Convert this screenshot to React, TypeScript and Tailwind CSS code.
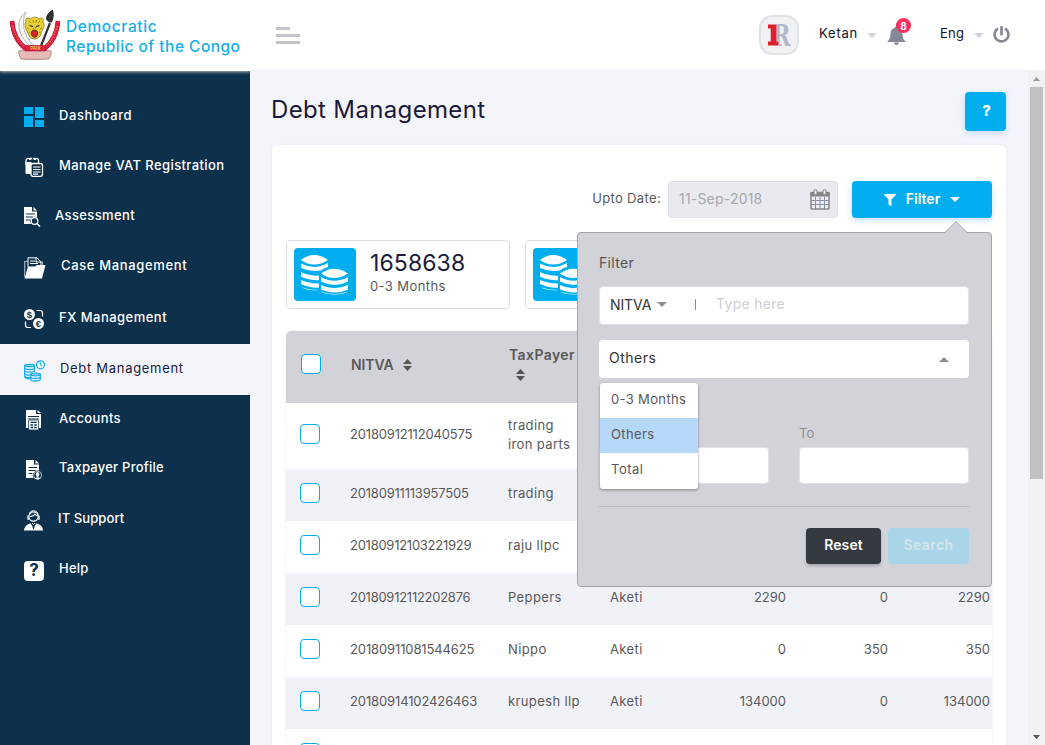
import React from "react";
import { FaPowerOff, FaFilter } from "react-icons/fa";

const Svg = ({ w, h, className = "", children }: { w: number; h: number; className?: string; children: React.ReactNode }) => (
  <svg width={w} height={h} viewBox={`0 0 ${w} ${h}`} className={"shrink-0 " + className} fill="none">{children}</svg>
);

const Triangle = ({ up = false, className = "" }: { up?: boolean; className?: string }) => (
  <svg width="10" height="5" viewBox="0 0 10 5" className={"shrink-0 " + className} fill="currentColor">
    <path d={up ? "M0 5 5 0l5 5z" : "M0 0h10L5 5z"} />
  </svg>
);

const Emblem = () => (
  <Svg w={52} h={52}>
    <path d="M17 3C6 10 8 26 21 37L25 37C14 25 12 14 17 3z" fill="#f4f4f4" stroke="#a3a3a3" strokeWidth=".8" />
    <path d="M32 37 41 14" stroke="#333" strokeWidth="2.2" />
    <path d="M43.500 1c1 4 1 8-1 12-2.500 0-4-1-5-3 0-4 3-7 6-9z" fill="#333" stroke="#222" />
    <path d="M17 13c-1-4 1-5 4-3 3-2.500 6-2.500 9 0 3-2 5-1 4 3 2 3 1 6-1 9l-2 5c-3 4-8 4-11 0l-2-5c-2-3-3-6-1-9z" fill="#e6cf35" stroke="#8b7b28" strokeWidth=".8" />
    <path d="M20 12l2 2m7 0 2-2M24 11l.5 2.500m3-2.500-.5 2.500M18 19l2 1m13-1-2 1M19.500 24l1.500-1m9 0 1.500 1" stroke="#8a7926" strokeWidth=".8" />
    <path d="M20.500 16.500l3.500 1.200m6.500-1.200-3.500 1.200" stroke="#333" strokeWidth="1.300" />
    <path d="M24.500 18v2.500h2V18" stroke="#9b872b" strokeWidth=".6" />
    <path d="M23 22q2.500-1.500 5 0l.8 3q-.8 3-3.300 3.500-2.500-.5-3.300-3.500z" fill="#df1f2d" stroke="#4b3b12" strokeWidth="1" />
    <path d="M3 12c1 13 6 22 14 28M49 12c-1 13-6 22-14 28" stroke="#9e1830" strokeWidth="4.600" />
    <path d="M3 12c1 13 6 22 14 28M49 12c-1 13-6 22-14 28" stroke="#e01f40" strokeWidth="3.800" />
    <path d="M4 17c2 9 6 16 12 21M48 17c-2 9-6 16-12 21" stroke="#ef9a3a" strokeWidth="1" strokeDasharray="1.200 1.500" />
    <path d="M10 42q16-3 32 0c1 3-1 5-2 8q-14 1-28 0c-1-3-3-5-2-8z" fill="#e5bbb5" stroke="#aa817c" strokeWidth=".9" />
    <path d="M16 36.500h21V42H16z" fill="#e01f40" stroke="#a31631" strokeWidth=".6" />
    <text x="26.500" y="41" textAnchor="middle" fontSize="4.600" fontWeight="bold" fill="#f5d24b" className="font-['Liberation_Sans',sans-serif]">PAIX</text>
  </Svg>
);

const navy = "#0d314d";
const DashboardIcon = () => <Svg w={20} h={20}><path d="M0 0h9v7H0zM11 0h9v11h-9zM0 9h9v11H0zM11 13h9v7h-9z" fill="#00aeef" /></Svg>;
const VatIcon = () => (
  <Svg w={19} h={20} className="ml-px">
    <path d="M1 8V3.500C1 2 2 1.500 3 1.500h9q1.500 0 1.500 2V6" stroke="#fff" strokeWidth="1.300" />
    <path d="M4.500 0v3M7.500 0v2M10.500 0v3" stroke={navy} strokeWidth="1" />
    <path d="M4 2h2M9 2h2" stroke="#fff" strokeWidth="2" />
    <path d="M.5 5h6v12H2Q.5 17 .5 15.500z" fill="#fff" />
    <rect x="6" y="6.500" width="11.500" height="12.800" rx="2" fill={navy} stroke="#fff" strokeWidth="1.300" />
    <path d="M8 10h7.500M8 12.500h7.500M8 15h7.500M8 17.200h5" stroke="#fff" strokeWidth="1.200" />
  </Svg>
);
const AssessmentIcon = () => (
  <Svg w={17} h={20}>
    <path d="M0 0h8v4.500h5V10l-3 2-3 2v3H0z" fill="#fff" /><path d="M9.500 0 13 3.500H9.500z" fill="#fff" />
    <path d="M2 7h9M2 10h7M2 13h4" stroke={navy} strokeWidth="1" />
    <circle cx="10.500" cy="14" r="4.300" fill={navy} /><circle cx="10.500" cy="14" r="3.300" stroke="#fff" strokeWidth="1.200" /><path d="m13 16.500 3 3" stroke="#fff" strokeWidth="1.600" />
  </Svg>
);
const CaseIcon = () => (
  <Svg w={22} h={22}>
    <path d="M.7 20V4.500h3M15 5h3.500v5" stroke="#9fb0bc" strokeWidth="1.200" />
    <path d="M4 10V.8h9L17 5v6" fill={navy} stroke="#fff" /><path d="M12 1v4h5M6 4h5M6 6.500h8" stroke="#fff" />
    <path d="M4 9.500h7l2-1.500h8.500L18 21.500H.5z" fill="#fff" />
  </Svg>
);
const FxIcon = () => (
  <Svg w={21} h={21}>
    <circle cx="5.500" cy="5.500" r="5.500" fill="#fff" /><circle cx="14.500" cy="14.500" r="5.500" fill="#fff" />
    <path d="M12.500 1.500H16q2.500 0 2.500 2.500v3.500M1.500 12.500V16q0 2.500 2.500 2.500h3" stroke="#fff" strokeWidth="1.200" />
    <text x="5.500" y="9" textAnchor="middle" fontSize="9.500" fontWeight="bold" fill={navy} className="font-['Liberation_Sans',sans-serif]">$</text>
    <text x="14.300" y="18" textAnchor="middle" fontSize="9.500" fontWeight="bold" fill={navy} className="font-['Liberation_Sans',sans-serif]">€</text>
  </Svg>
);
const DebtIcon = () => (
  <Svg w={22} h={22}>
    <g stroke="#16aeec" strokeWidth="1.300">
      <path d="M.7 5.500v11c0 2 3 2.200 5.300 2M10.300 5.500v6" />
      <ellipse cx="5.500" cy="5.500" rx="4.800" ry="1.200" fill="#8ed8f6" />
      <path d="M.7 8c0 2 9.600 2 9.600 0M.7 10.700c0 2 9.600 2 9.600 0M.7 13.400c0 1.700 4 2 5.500 1.500M.7 16c0 1.500 3 2 5.500 1.500" />
      <ellipse cx="11.500" cy="14.500" rx="4.800" ry="1.300" fill="#8ed8f6" />
      <path d="M6.700 14.500v5c0 2 9.600 2 9.600 0v-5M6.700 17c0 2 9.600 2 9.600 0" />
      <circle cx="16.500" cy="4.800" r="4" /><path d="M16.500 2.500v2.600l1.500 1" strokeWidth="1" />
    </g>
  </Svg>
);
const AccountsIcon = () => (
  <Svg w={16} h={20} className="ml-[2px]">
    <path d="M0 0h10v4h5v14H0z" fill="#fff" /><path d="m11.500 0 3.500 3h-3.500z" fill="#fff" />
    <path d="M2 6.500h11M2 9h11" stroke={navy} strokeWidth="1" />
    <rect x="2.600" y="10" width="10" height="10" rx="1" fill="#fff" stroke={navy} strokeWidth=".8" />
    <path d="M4.500 12.300h6.200M4.500 15H7M8.200 15h2.500M4.500 17.500H7M8.200 17.500h2.500" stroke={navy} strokeWidth="1.300" />
  </Svg>
);
const ProfileIcon = () => (
  <Svg w={17} h={20} className="ml-[2px]">
    <path d="M0 0h8v4.500h5V18H0z" fill="#fff" /><path d="M9.500 0 13 3.500H9.500z" fill="#fff" />
    <path d="M2.500 7.500h8.500M2.500 10.500h7M2.500 13.500h4" stroke={navy} strokeWidth="1" />
    <circle cx="11.600" cy="15.300" r="4.800" fill={navy} /><circle cx="11.600" cy="15.300" r="4" stroke="#fff" strokeWidth=".7" />
    <ellipse cx="11.600" cy="14.500" rx="1.700" ry="2.500" fill="#fff" /><path d="M8.800 18.300q2.800-2 5.600 0l-2.800 1.200z" fill="#fff" />
  </Svg>
);
const SupportIcon = () => (
  <Svg w={20} h={21}>
    <circle cx="9.500" cy="6.500" r="4.600" stroke="#fff" strokeWidth="1.200" /><path d="M5.500 5Q5 1 9.500.8 14 1 14 5" stroke="#fff" strokeWidth="1" />
    <path d="M4 5.500v3.500h1.500M15 5.500v3.500h-1.500" stroke="#dce2e7" strokeWidth="1.600" />
    <path d="M6 6.500q4-.5 5-2.500 1 1.500 2.500 2" stroke="#fff" strokeWidth="1.200" />
    <path d="M0 20.500q0-5 6.500-7.300L9.500 18l3-4.800q6.500 2 6.500 7.300z" fill="#fff" /><path d="m8 13 1.500 1.500L11 13" stroke="#fff" strokeWidth="1" />
    <path d="m9.500 15-1 2 1 3 1-3z" fill={navy} />
  </Svg>
);
const HelpIcon = () => (
  <span className="flex h-5 w-5 items-center justify-center rounded-[4px] bg-white text-[17px] leading-none font-bold text-[#0d314d]">?</span>
);

const nav = [
  { label: "Dashboard", icon: <DashboardIcon />, row: "h-[50px]", pad: "w-[59px]", track: "tracking-[.6px]" },
  { label: "Manage VAT Registration", icon: <VatIcon />, row: "h-[50px]", pad: "w-[59px]", track: "tracking-[.4px]" },
  { label: "Assessment", icon: <AssessmentIcon />, row: "h-[50px]", pad: "w-[55px]", track: "tracking-[.38px]" },
  { label: "Case Management", icon: <CaseIcon />, row: "h-[51px]", pad: "w-[61px]", track: "tracking-[.65px]" },
  { label: "FX Management", icon: <FxIcon />, row: "h-[52px]", pad: "w-[59px]", track: "tracking-[.48px]" },
  { label: "Debt Management", icon: <DebtIcon />, row: "h-[51px]", pad: "w-[60px]", track: "tracking-[.7px]", active: true },
  { label: "Accounts", icon: <AccountsIcon />, row: "h-[48px]", pad: "w-[59px]", track: "tracking-[.38px]" },
  { label: "Taxpayer Profile", icon: <ProfileIcon />, row: "h-[51px]", pad: "w-[59px]", track: "tracking-[.25px]" },
  { label: "IT Support", icon: <SupportIcon />, row: "h-[51px]", pad: "w-[58px]", track: "tracking-[.1px]" },
  { label: "Help", icon: <HelpIcon />, row: "h-[49px]", pad: "w-[59px]", track: "tracking-[.2px]" },
];

const Coins = () => (
  <div className="flex h-[53px] w-[62px] shrink-0 items-center justify-center rounded-[4px] bg-[#00aeef]">
    <Svg w={48} h={40}>
      <g fill="#fff">
        <path d="M0 5q13-10 27 0-14 9-27 0z" />
        <path d="M0 8.500Q13 15.500 27 8v4q-4 .8-7 3.500-11 1.500-20-2.500z" />
        <path d="M0 17q8 4 18 3.800v4.400Q8 25.500 0 21.500zM0 25q8 3.500 18 3.400v4.200Q8 33 0 29zM0 32q8 3 18 3v-1 .5V35Q8 36 0 32z" />
        <path d="M20 18.500q13-9.500 27 0-14 9-27 0z" />
        <path d="M20 22q13 7.500 27 0v4.500q-13 7-27 0zM20 30q13 6.500 27 0v4.500q-13 6-27 0zM20 36.500q13 5 27 0-4 3-13.500 3T20 36.500z" />
      </g>
    </Svg>
  </div>
);

const StatCard = ({ value, label }: { value: string; label: string }) => (
  <div className="flex h-[69px] w-[224px] shrink-0 rounded-[4px] border border-[#dddee5] p-[7px]">
    <Coins />
    <div className="pl-3.5">
      <div className="mt-[2px] text-[23px] leading-[26px] tracking-[.1px] text-[#1a1a3a]">{value}</div>
      <div className="text-[13px] leading-[20px] tracking-[.4px] text-[#595959]">{label}</div>
    </div>
  </div>
);

const Box = () => <span className="block h-5 w-5 rounded-[4px] border border-[#00aeef] bg-white" />;
const Sort = ({ className = "" }: { className?: string }) => (
  <svg width="9" height="12" viewBox="0 0 9 12" fill="#555" className={className}><path d="M0 5 4.500 0 9 5zM0 7h9L4.500 12z" /></svg>
);

const rows = [
  { id: "20180912112040575", name: "trading\niron parts", track: "tracking-[-.18px]", place: "", a: "", b: "", c: "" },
  { id: "20180911113957505", name: "trading", track: "tracking-[-.2px]", place: "", a: "", b: "", c: "" },
  { id: "20180912103221929", name: "raju llpc", track: "tracking-[-.26px]", place: "", a: "", b: "", c: "" },
  { id: "20180912112202876", name: "Peppers", track: "tracking-[-.26px]", place: "Aketi", a: "2290", b: "0", c: "2290" },
  { id: "20180911081544625", name: "Nippo", track: "tracking-[-.12px]", place: "Aketi", a: "0", b: "350", c: "350" },
  { id: "20180914102426463", name: "krupesh llp", track: "tracking-[-.12px]", place: "Aketi", a: "134000", b: "0", c: "134000" },
  { id: "", name: "", track: "", place: "", a: "", b: "", c: "" },
];

const Sidebar = () => (
  <aside className="flex w-[250px] shrink-0 flex-col bg-[#0d314d]">
    <div className="flex h-[71px] shrink-0 items-start bg-white pt-[9px] pl-[9px] shadow-[0_1px_3px_#ffffffb0]">
      <Emblem />
      <div className="pt-[8px] pl-[5px] text-[15.5px] leading-5 font-medium whitespace-nowrap text-[#14aeea]">
        <div className="tracking-[.6px]">Democratic</div>
        <div className="tracking-[.47px]">Republic of the Congo</div>
      </div>
    </div>
    <nav className="pt-5">
      {nav.map((n) => (
        <div key={n.label} className={`flex items-center text-[13px] whitespace-nowrap ${n.row} ${n.active ? "bg-[#f4f5fa] text-[#1a1a3a]" : "font-medium text-white"}`}>
          <span className={`flex shrink-0 pt-[2px] pl-6 ${n.pad}`}>{n.icon}</span>
          <span className={`pb-px ${n.track}`}>{n.label}</span>
        </div>
      ))}
    </nav>
  </aside>
);

const Bell = () => (
  <Svg w={19} h={19}>
    <path d="M9.500 0c1 0 1.300.6 1.300 1.500C14 2.300 15.500 4.800 15.500 8c0 4.500 1.500 6 3.500 8H0c2-2 3.500-3.500 3.500-8 0-3.200 1.500-5.700 4.700-6.500C8.200.6 8.500 0 9.500 0zM7 16.500h5q-.3 2.500-2.500 2.500T7 16.500z" fill="#858993" />
  </Svg>
);

const Header = () => (
  <header className="flex h-[71px] shrink-0 items-center border-b border-[#eef0f5] bg-white pl-[26px] text-[13px] text-[#11112b]">
    <div className="flex flex-col gap-1">
      <i className="h-[3px] w-3.5 bg-[#c2c3cc]" /><i className="h-[3px] w-6 bg-[#c2c3cc]" /><i className="h-[3px] w-6 bg-[#c2c3cc]" />
    </div>
    <div className="ml-[459px] flex h-10 w-10 shrink-0 items-center justify-center rounded-[13px] border-2 border-[#dfe1e9] bg-[#f1f1f4]">
      <svg width="24" height="24" viewBox="0 0 24 24" className="overflow-visible font-['DejaVu_Serif',serif]" fontWeight="bold">
        <text x="5.500" y="22.500" fontSize="29" fill="#b3b9ca" textLength="18" lengthAdjust="spacingAndGlyphs">R</text>
        <path d="M0 0h9.800v18h2v6H0z" fill="#f1f1f4" /><path d="M1 1.500h8.500v17h2v4H1v-4h2.700v-13H1z" fill="#df202d" />
      </svg>
    </div>
    <span className="ml-5 w-[43px] pb-[2px] tracking-[.8px] whitespace-nowrap">Ketan</span>
    <Triangle className="ml-[5px] text-[#d1d2d9]" />
    <div className="relative mr-px ml-[9px] flex h-5 w-5 items-center justify-center">
      <Bell />
      <span className="absolute -top-[7px] left-[10px] flex h-[15px] w-[15px] items-center justify-center rounded-full bg-[#fb2e5c] text-[10px] leading-none font-bold text-white">8</span>
    </div>
    <span className="ml-[33px] w-[25px] pb-[2px] tracking-[.2px]">Eng</span>
    <Triangle className="ml-[9px] text-[#d1d2d9]" />
    <FaPowerOff size={17} color="#858993" className="mb-[2px] ml-[9px]" />
  </header>
);

const FilterPopup = () => (
  <div className="absolute top-[87px] left-[305px] z-10 h-[355px] w-[415px] rounded-[4px] border border-[#a4a5a9] bg-[#d2d3d8] pt-[20px] pr-[22px] pl-[21px] text-[#333]">
    <svg width="26" height="13" viewBox="0 0 26 13" className="absolute -top-[12px] right-[22px]"><path d="M1 12.500 13 .7l12 11.800" fill="#d2d3d8" stroke="#a4a5a9" /><path d="M2 13h22" stroke="#d2d3d8" strokeWidth="2" /></svg>
    <div className="text-[14px] leading-5 tracking-[.35px] text-[#555]">Filter</div>
    <div className="mt-[13px] flex h-[39px] items-center rounded-[4px] border border-[#dfe0e6] bg-white pb-[2px] pl-[10px] text-[14px]">
      <span className="w-[42px] tracking-[-.1px]">NITVA</span><Triangle className="ml-[5px] text-[#8d8d8d]" />
      <i className="ml-[28px] h-[11px] w-px bg-[#898989]" />
      <span className="ml-[20px] pb-[2px] tracking-[.3px] text-[#ced0d7]">Type here</span>
    </div>
    <div className="mt-[15px] flex h-[38px] items-center justify-between rounded-[4px] bg-white pr-5 pl-[10px] text-[14px]">
      <span className="pb-[3px] tracking-[.5px]">Others</span><Triangle up className="text-[#8d8d8d]" />
    </div>
    <div className="mt-[45px] grid grid-cols-2 gap-[30px] text-[13px] text-[#8c8d93]">
      <div><div className="mt-6 h-[37px] rounded-[4px] border border-[#dfe0e6] bg-white" /></div>
      <div><div className="h-[20px] leading-5">To</div><div className="mt-[4px] h-[37px] rounded-[4px] border border-[#dfe0e6] bg-white" /></div>
    </div>
    <div className="mt-[22px] h-px bg-[#b9babf]" />
    <div className="mt-[21px] flex justify-end gap-[7px] text-[14px] font-semibold">
      <button className="h-9 w-[75px] rounded-[4px] bg-[#343a40] pb-[3px] tracking-[.1px] text-white shadow-[0_2px_3px_#0003]">Reset</button>
      <button className="h-9 w-[81px] rounded-[4px] bg-[#a9d5e8] pb-[3px] tracking-[.4px] text-[#d6e4ed]">Search</button>
    </div>
    <div className="absolute top-[150px] left-[22px] h-[106px] w-[98px] overflow-hidden rounded-[3px] bg-white text-[13px] leading-[33px] text-[#595959] shadow-[0_1px_3px_#0006]">
      <div className="h-[35px] pl-[11px] tracking-[.35px] whitespace-nowrap">0-3 Months</div>
      <div className="h-[35px] bg-[#b5d7f8] pl-[11px] tracking-[.4px]">Others</div>
      <div className="h-[35px] pl-[11px] tracking-[.5px]">Total</div>
    </div>
  </div>
);

const Calendar = () => (
  <Svg w={20} h={21}>
    <rect x="1" y="3.500" width="18" height="16.500" rx="1" fill="#eceef3" stroke="#858585" strokeWidth="1.500" />
    <path d="M.5 3h19v4.500H.5z" fill="#858585" />
    <path d="M5.500 8v12M10 8v12M14.500 8v12M1 11.500h18M1 15.500h18" stroke="#8790a3" strokeWidth="1" />
    <rect x="4" y=".7" width="3" height="5" rx="1.200" fill="#e9eaef" stroke="#858585" /><rect x="13" y=".7" width="3" height="5" rx="1.200" fill="#e9eaef" stroke="#858585" />
  </Svg>
);

const cols = "grid grid-cols-[64px_158px_102px_74px_102px_102px_102px]";

export default function App() {
  return (
    <div className="flex h-[745px] w-[1045px] overflow-hidden bg-[#f4f5fa] font-['Inter','Open_Sans',sans-serif]">
      <Sidebar />
      <div className="flex min-w-0 flex-1 flex-col">
        <Header />
        <div className="flex min-h-0 flex-1">
          <main className="min-w-0 flex-1 pt-[21px] pr-[22px] pl-[22px]">
            <div className="flex h-[53px] items-start justify-between">
              <h1 className="-ml-px pt-[2px] text-[24px] leading-8 tracking-[.35px] whitespace-nowrap text-[#1a1a3a]">Debt Management</h1>
              <button className="h-[39px] w-[41px] rounded-[4px] bg-[#00aeef] pl-[2px] text-[15px] font-extrabold text-white shadow-[0_2px_6px_#8fc7ff90]">?</button>
            </div>
            <section className="relative h-[620px] rounded-[5px] bg-white px-3.5 pt-9 shadow-[0_0_3px_#e6e8f0]">
              <div className="flex h-[37px] items-center justify-end">
                <span className="pb-[2px] text-[13px] tracking-[.35px] text-[#595959]">Upto Date:</span>
                <div className="ml-[7px] flex h-[37px] w-[170px] items-center justify-between rounded-[4px] border border-[#dfe1e8] bg-[#e9eaef] pr-[7px] pl-[10px] text-[14px] text-[#a6a7ac]">
                  <span className="pb-[3px] tracking-[.2px]">11-Sep-2018</span><Calendar />
                </div>
                <button className="ml-3.5 flex h-[37px] w-[140px] items-center justify-center rounded-[4px] bg-[#00aeef] text-[14px] font-semibold text-white shadow-[0_2px_6px_#8fc7ff90]">
                  <FaFilter size={12} /><span className="mx-[10px] pb-[2px]">Filter</span><Triangle />
                </button>
              </div>
              <div className="mt-[22px] flex gap-[15px] overflow-hidden">
                <StatCard value="1658638" label="0-3 Months" />
                <StatCard value="" label="" />
              </div>
              <div className="mt-[22px] overflow-hidden rounded-t-[5px] text-[13px] text-[#595959] shadow-[0_0_2px_#dfe1e8]">
                <div className={`${cols} h-[72px] items-center bg-[#d2d3d8] text-[14px] font-semibold`}>
                  <span className="pb-[6px] pl-[15px]"><Box /></span>
                  <span className="flex items-center gap-[9px] pb-[5px] pl-px tracking-[-.1px]">NITVA <Sort /></span>
                  <span className="pb-[8px] pl-px leading-5 tracking-[.4px]">TaxPayer<Sort className="mt-[4px] ml-[7px]" /></span>
                </div>
                {rows.map((r, i) => (
                  <div key={i} className={`${cols} items-center ${i === 0 ? "h-[66px]" : "h-[52px]"} ${i % 2 ? "bg-[#f1f2f8]" : "bg-white"}`}>
                    <span className="pb-1 pl-3.5"><Box /></span>
                    <span className={`pb-[2px] ${r.track}`}>{r.id}</span>
                    <span className="w-[76px] pb-[3px] leading-[19px] tracking-[.38px] whitespace-pre">{r.name}</span>
                    <span className="pb-[2px] tracking-[.4px]">{r.place}</span>
                    <span className="pb-[2px] text-right">{r.a}</span>
                    <span className="pb-[2px] text-right">{r.b}</span>
                    <span className="pb-[2px] text-right">{r.c}</span>
                  </div>
                ))}
              </div>
              <FilterPopup />
            </section>
          </main>
          <div className="-mt-px flex w-[17px] shrink-0 flex-col items-center bg-[#f1f1f1]">
            <span className="flex h-[17px] items-center"><svg width="7" height="4" viewBox="0 0 7 4"><path d="M0 4 3.500 0 7 4z" fill="#9a9a9a" /></svg></span>
            <i className="h-[392px] w-[13px] bg-[#c1c1c1]" />
            <span className="mt-auto flex h-[17px] items-center"><svg width="7" height="4" viewBox="0 0 7 4"><path d="M0 0h7L3.500 4z" fill="#505050" /></svg></span>
          </div>
        </div>
      </div>
    </div>
  );
}
